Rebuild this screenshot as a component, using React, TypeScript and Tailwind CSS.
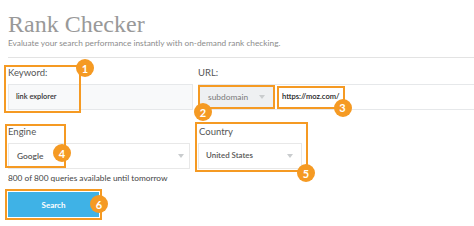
import React from "react";

const Badge = ({ n, className }: { n: number; className: string }) => (
  <div
    className={
      "absolute z-10 flex h-[18px] w-[18px] items-center justify-center rounded-full bg-[#f59a23] text-[11px] font-bold leading-none text-white " +
      className
    }
  >
    {n}
  </div>
);

const Caret = () => (
  <svg width="6" height="4" viewBox="0 0 6 4" className="shrink-0">
    <path d="M0 0 L6 0 L3 4 Z" fill="#c9ccce" />
  </svg>
);

export default function App() {
  return (
    <div className="h-[226px] w-[474px] overflow-hidden bg-white font-['Lato',sans-serif]">
      <div className="pl-2">
        <h1 className="mt-[11px] font-['Liberation_Serif',serif] text-[24px] leading-[26px] text-[#999999]">
          Rank Checker
        </h1>
        <p className="text-[8.3px] leading-[12px] text-[#8c8c8c]">
          Evaluate your search performance instantly with on-demand rank checking.
        </p>
        <div className="mt-[8px] border-t border-[#e3e3e3]" />

        <div className="mt-[8px] grid grid-cols-[185px_1fr] gap-x-[5px]">
          <div className="relative">
            <div className="pointer-events-none absolute left-[-4px] top-[-1px] h-[48px] w-[77px] border-2 border-[#f59a23]" />
            <Badge n={1} className="left-[68px] top-[-7px]" />
            <div className="text-[9.5px] leading-[14px] text-[#555]">Keyword:</div>
            <div className="mt-[4px] flex h-[26px] items-center border border-[#e6e8ea] bg-[#f8f9fa] pl-[7px] text-[7.4px] font-semibold text-[#333]">
              link explorer
            </div>
          </div>
          <div>
            <div className="text-[9.5px] leading-[14px] text-[#555]">URL:</div>
            <div className="mt-[4px] flex h-[26px] items-center border-y border-[#e6e8ea] bg-white pl-[2px]">
              <div className="relative flex h-[20px] w-[73px] items-center justify-between bg-[#eef0f2] pl-[8px] pr-[8px] text-[8.4px] text-[#7a7a7a] outline-2 outline-[#f59a23]">
                subdomain
                <Caret />
                <Badge n={2} className="left-[-6px] top-[16px]" />
              </div>
              <div className="relative ml-[6px] flex h-[19px] items-center px-[3px] text-[7.6px] font-semibold text-[#222] outline-2 outline-[#f59a23]">
                https://moz.com/
                <Badge n={3} className="right-[-9px] top-[11px]" />
              </div>
            </div>
          </div>
        </div>

        <div className="mt-[15px] grid grid-cols-[185px_1fr] gap-x-[5px]">
          <div className="relative">
            <div className="pointer-events-none absolute left-[-3px] top-[-1px] h-[44px] w-[61px] border-2 border-[#f59a23]" />
            <Badge n={4} className="left-[45px] top-[19px]" />
            <div className="text-[9.5px] leading-[14px] text-[#555]">Engine</div>
            <div className="mt-[4px] flex h-[26px] w-[182px] items-center justify-between border border-[#e8e8e8] bg-white pl-[8px] pr-[5px] text-[8.4px] font-semibold text-[#555]">
              Google
              <Caret />
            </div>
          </div>
          <div className="relative w-[107px] outline-2 outline-offset-[1px] outline-[#f59a23]">
            <Badge n={5} className="right-[-10px] top-[39px]" />
            <div className="pl-[1px] text-[9.5px] leading-[14px] text-[#555]">Country</div>
            <div className="mt-[4px] flex h-[26px] w-[104px] items-center justify-between border border-[#e8e8e8] bg-white pl-[7px] pr-[8px] text-[7.9px] font-semibold text-[#555]">
              United States
              <Caret />
            </div>
          </div>
        </div>

        <p className="mt-[3px] text-[8.3px] leading-[12px] text-[#444]">
          800 of 800 queries available until tomorrow
        </p>

        <button className="relative mt-[8px] flex h-[25px] w-[91px] items-center justify-center bg-[#3fb2e6] text-[8px] font-bold text-white outline-2 outline-offset-[1px] outline-[#f59a23]">
          Search
          <Badge n={6} className="right-[-9px] top-[3px]" />
        </button>
      </div>
    </div>
  );
}
